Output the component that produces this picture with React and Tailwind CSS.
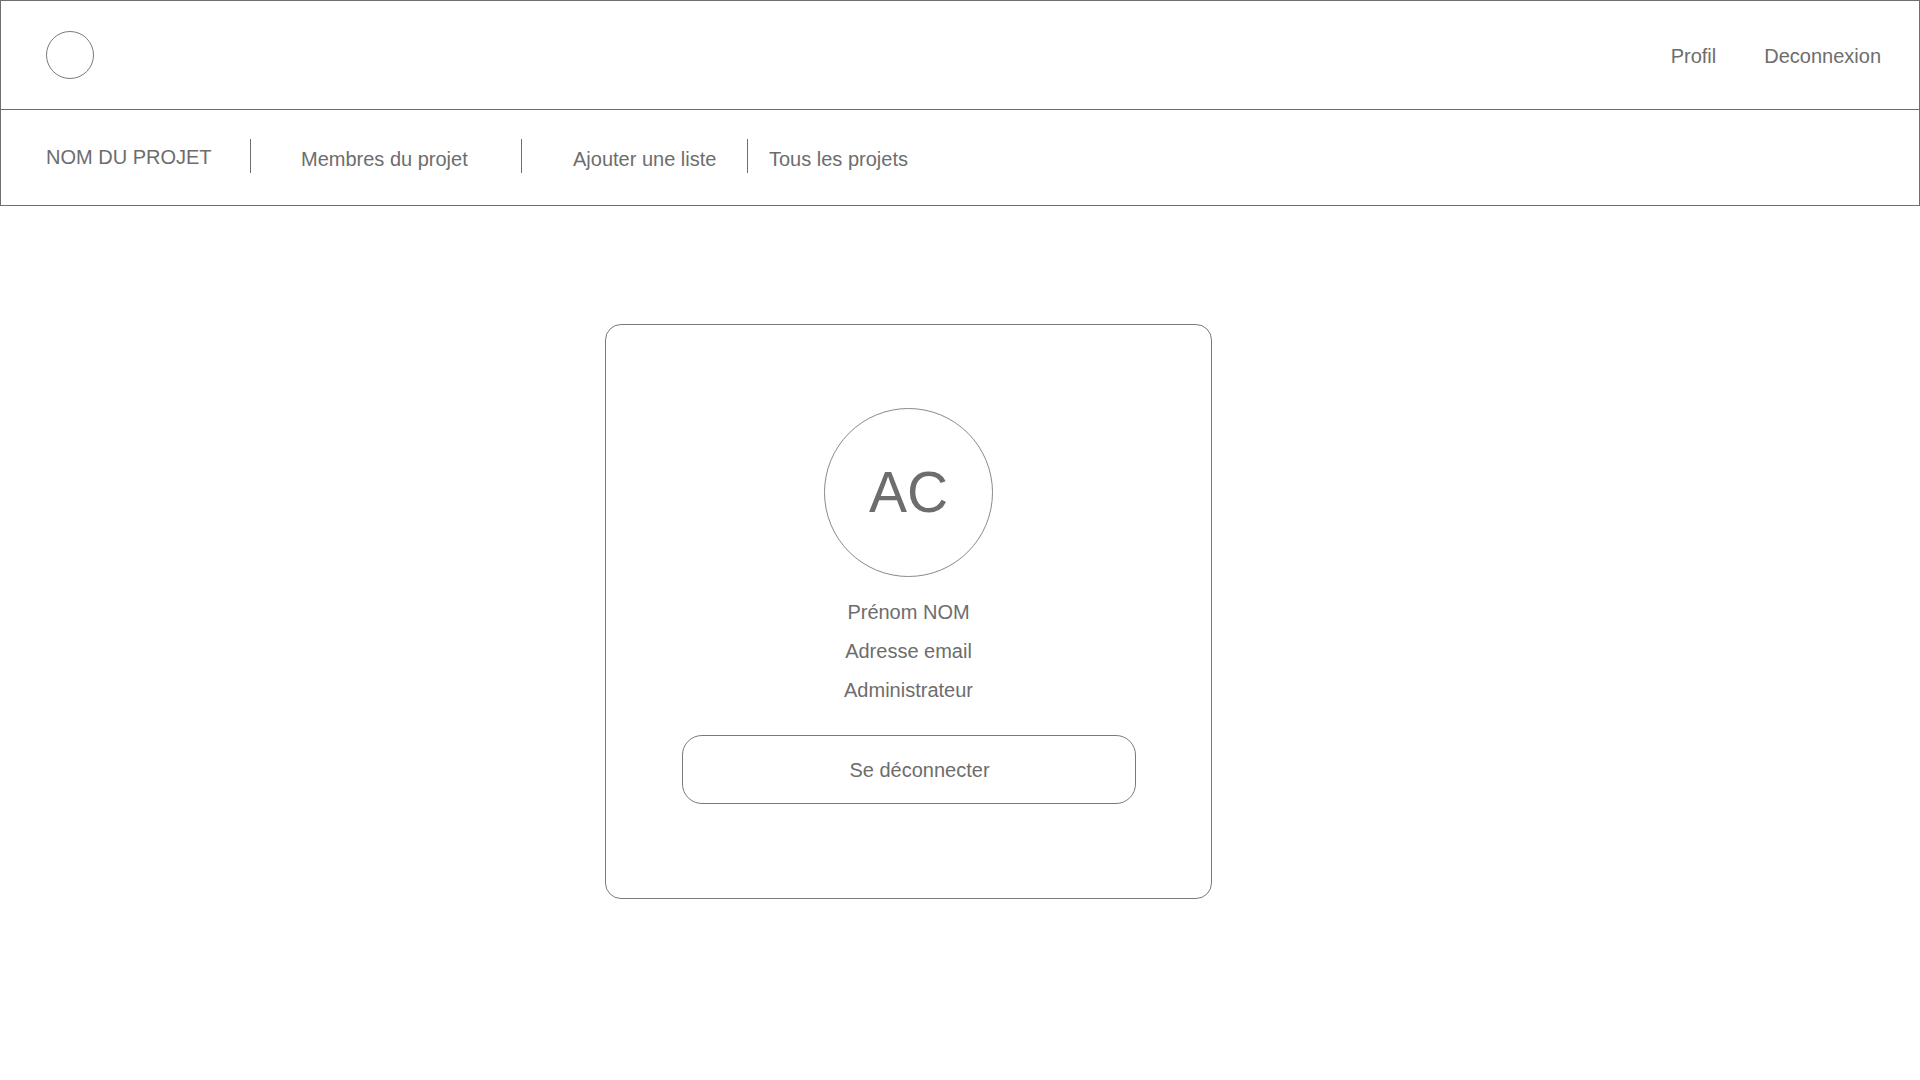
import React from 'react';

const navItems = [
  { label: 'Membres du projet', className: 'ml-[50px] w-[220px]' },
  { label: 'Ajouter une liste', className: 'ml-[51px] w-[174px]' },
];

const Separator = () => <div className="h-[34px] w-px bg-[#6f6f6f] -mt-[3px]"></div>;

const App = () => {
  return (
    <div
      className="min-h-screen w-full bg-white text-[#6d6d6d]"
      style={{ fontFamily: '"Liberation Sans", Arial, sans-serif' }}
    >
      {/* top bar */}
      <header className="flex h-[110px] items-center justify-between border border-[#6f6f6f] pl-[45px] pr-[38px]">
        <div className="h-[48px] w-[48px] rounded-full border border-[#7a7a7a]"></div>
        <div className="mt-[2px] flex items-center gap-[48px] text-[20px]">
          <span>Profil</span>
          <span>Deconnexion</span>
        </div>
      </header>

      {/* project nav */}
      <nav className="flex h-[96px] items-center border border-t-0 border-[#6f6f6f] pl-[45px] text-[20px]">
        <span className="w-[204px] -mt-[1px]">NOM DU PROJET</span>
        <Separator />
        {navItems.map(item => (
          <React.Fragment key={item.label}>
            <span className={`mt-[3px] ${item.className}`}>{item.label}</span>
            <Separator />
          </React.Fragment>
        ))}
        <span className="ml-[21px] mt-[3px]">Tous les projets</span>
      </nav>

      {/* profile card */}
      <main className="flex pl-[605px] pt-[118px]">
        <div className="flex h-[575px] w-[607px] flex-col items-center rounded-[16px] border border-[#7a7a7a] pt-[83px]">
          <div className="flex h-[169px] w-[169px] items-center justify-center rounded-full border border-[#8a8a8a]">
            <span className="text-[57px] leading-none">AC</span>
          </div>
          <div className="mt-[23px] flex flex-col items-center gap-[15px] text-[20px] leading-[24px]">
            <span>Prénom NOM</span>
            <span>Adresse email</span>
            <span>Administrateur</span>
          </div>
          <button className="mt-[33px] flex h-[69px] w-[454px] items-center justify-center rounded-[20px] border border-[#7a7a7a] pl-[22px] text-[20px] text-[#6d6d6d]">
            Se déconnecter
          </button>
        </div>
      </main>
    </div>
  );
};

export default App;
